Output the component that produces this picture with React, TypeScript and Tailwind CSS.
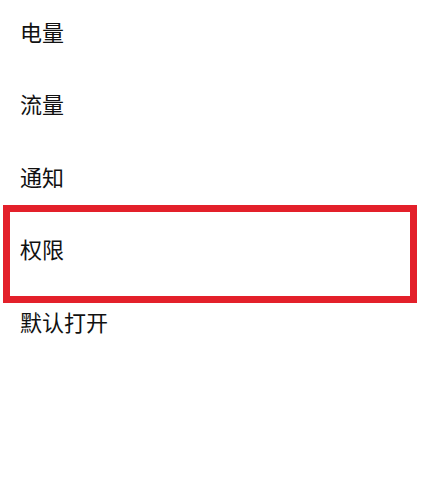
const ITEMS = ['电量', '流量', '通知', '权限', '默认打开'];

export default function App() {
  return (
    <div
      className="w-[433px] h-[490px] bg-white overflow-hidden"
      style={{ fontFamily: '"Noto Sans CJK SC", "Noto Sans", sans-serif' }}
    >
      <ul className="-mt-[5px]">
        {ITEMS.map((label, i) => (
          <li key={label} className="relative h-[72.5px] flex items-center pl-[20px] text-[22px] text-[#111]">
            {label}
            {/* highlight annotation around the permissions row */}
            {i === 3 && (
              <div className="absolute left-[3px] right-[16px] -top-[8px] -bottom-[18px] border-[7px] border-[#e3202a] pointer-events-none" />
            )}
          </li>
        ))}
      </ul>
    </div>
  );
}
